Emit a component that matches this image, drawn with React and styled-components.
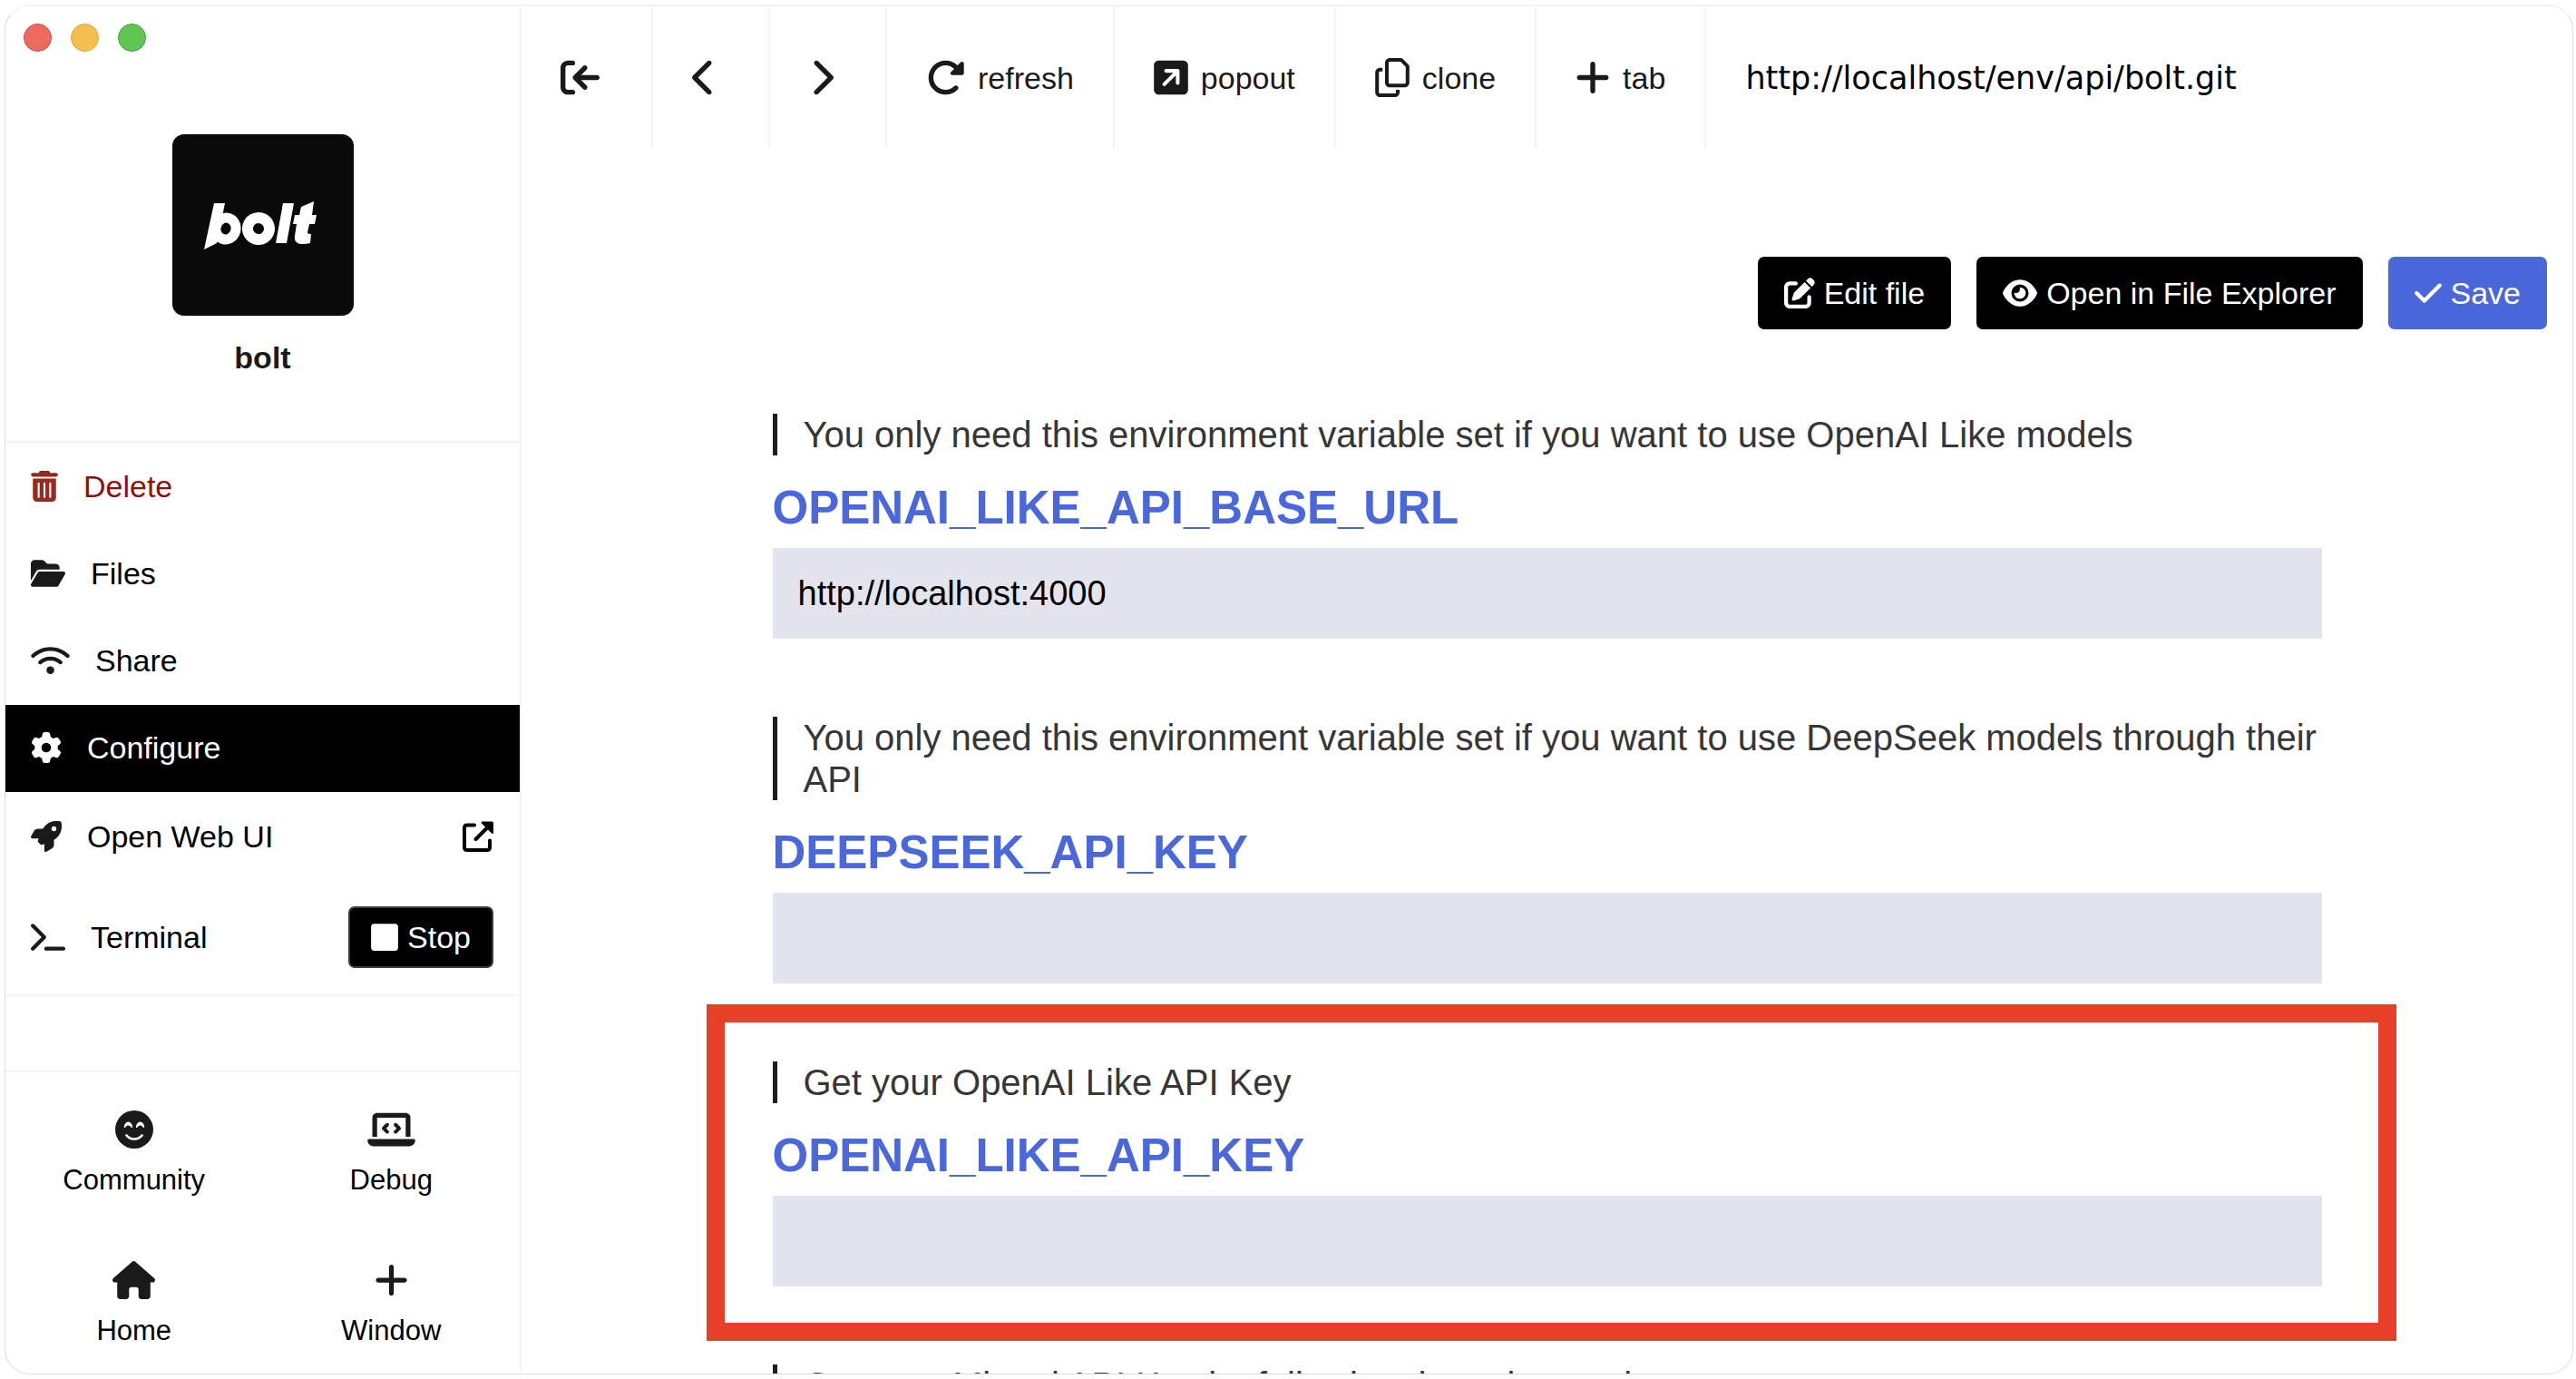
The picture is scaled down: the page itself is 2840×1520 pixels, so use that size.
import React from "react";
import styled, { createGlobalStyle, css } from "styled-components";
import {
  FaArrowRightToBracket,
  FaCheck,
  FaChevronLeft,
  FaChevronRight,
  FaEye,
  FaFaceSmileBeam,
  FaFolderOpen,
  FaGear,
  FaHouse,
  FaLaptopCode,
  FaPenToSquare,
  FaPlus,
  FaRegCopy,
  FaRocket,
  FaRotateRight,
  FaSquareArrowUpRight,
  FaTerminal,
  FaTrashCan,
  FaWifi,
} from "react-icons/fa6";
import { FaStop } from "react-icons/fa";

const sans = `"Liberation Sans", Arial, Helvetica, sans-serif`;
const line = "#f4f4f4";
const ink = "#1a1a1a";
const blue = "#4a68db";

const GlobalStyle = createGlobalStyle`
  *, *::before, *::after { box-sizing: border-box; }
  body { margin: 0; background: #fff; font-family: ${sans}; font-size: 34px; line-height: 38px; color: #000; }
  button, input { font: inherit; color: inherit; }
  h1, h2, p { margin: 0; }
  svg { display: block; flex: none; }
`;

const Page = styled.div`
  height: 100vh;
  padding: 5px 3px 5px 5px;
`;

const Window = styled.div`
  display: flex;
  height: 100%;
  overflow: hidden;
  border: 1px solid #dcdcdc;
  border-top: 2px solid #f4f4f4;
  border-radius: 28px;
  background: #fff;
`;

/* Font Awesome glyphs share a 512-unit height and vary in width. */
const Glyph = styled.span`
  flex: none;
  width: ${(p) => Math.round((p.$size * (p.$units || 512)) / 512)}px;
  height: ${(p) => p.$size}px;
  transform: ${(p) => (p.$mirror ? "scaleX(-1)" : "none")};

  svg {
    width: 100%;
    height: 100%;
  }
`;

const Sidebar = styled.aside`
  display: flex;
  flex-direction: column;
  flex: none;
  width: 569px;
  border-right: 2px solid ${line};
`;

const TrafficLights = styled.div`
  display: flex;
  gap: 21px;
  padding: 19px 20px 0;
`;

const Light = styled.button`
  width: 31px;
  height: 31px;
  padding: 0;
  border: 1px solid ${(p) => p.$edge};
  border-radius: 50%;
  background: ${(p) => p.$fill};
`;

const AppCard = styled.header`
  display: flex;
  flex-direction: column;
  align-items: center;
  gap: 27px;
  padding: 91px 0 73px;
  border-bottom: 3px solid ${line};
`;

const AppLogo = styled.svg`
  width: 200px;
  height: 200px;
  border-radius: 13px;
  background: #0a0a0a;
`;

const AppName = styled.h1`
  font-size: 34px;
  font-weight: 700;
  line-height: 38px;
  color: ${ink};
`;

const Menu = styled.nav`
  display: flex;
  flex-direction: column;
  border-bottom: 2px solid ${line};
`;

const MenuRow = styled.div`
  display: flex;
  align-items: center;
  justify-content: space-between;
  min-height: ${(p) => p.$height || 96}px;
  padding: 0 29px 2px 0;
  background: ${(p) => (p.$active ? "#000" : "transparent")};
`;

const MenuLink = styled.a`
  display: flex;
  flex: 1;
  align-items: center;
  align-self: stretch;
  gap: 28px;
  padding-left: 28px;
  color: ${(p) => p.$color || "#000"};
  text-decoration: none;

  ${Glyph} {
    color: ${(p) => p.$iconColor || ink};
  }
`;

const solidButton = css`
  display: flex;
  align-items: center;
  gap: 10px;
  color: #fff;
`;

const StopButton = styled.button`
  ${solidButton}
  height: 68px;
  padding: 0 23px;
  border: 2px solid #3c3c3c;
  border-radius: 7px;
  background: #000;
`;

const Spacer = styled.div`
  flex: 1;
  border-bottom: 2px solid ${line};
`;

const Shortcuts = styled.nav`
  display: grid;
  grid-template-columns: 1fr 1fr;
  row-gap: 71px;
  padding: 42px 0 29px;
`;

const Shortcut = styled.a`
  display: flex;
  flex-direction: column;
  align-items: center;
  gap: 17px;
  font-size: 31px;
  line-height: 36px;
  color: #000;
  text-decoration: none;

  ${Glyph} {
    color: ${ink};
  }
`;

const Main = styled.main`
  display: flex;
  flex: 1;
  flex-direction: column;
  min-width: 0;
`;

const Toolbar = styled.div`
  display: flex;
  flex: none;
  height: 157px;
`;

const ToolButton = styled.button`
  display: flex;
  align-items: center;
  gap: 14px;
  padding: 0 43px;
  border: 0;
  border-right: 2px solid ${line};
  background: transparent;
  color: ${ink};
`;

const Address = styled.input`
  flex: 1;
  min-width: 0;
  padding: 0 43px;
  border: 0;
  outline: 0;
  background: transparent;
  font-family: "DejaVu Sans", Verdana, sans-serif;
  font-size: 35px;
  color: #000;
`;

const Actions = styled.div`
  display: flex;
  flex: none;
  justify-content: flex-end;
  gap: 28px;
  padding: 119px 28px 93px;
`;

const ActionButton = styled.button`
  ${solidButton}
  height: 80px;
  padding: 0 29px;
  border: 0;
  border-radius: 7px;
  background: ${(p) => (p.$primary ? blue : "#000")};
`;

const Form = styled.form`
  display: flex;
  flex-direction: column;
  gap: 86px;
  width: 100%;
  max-width: 1708px;
  margin: 0 auto;
`;

const Field = styled.section`
  position: relative;
`;

const Hint = styled.p`
  padding-left: 29px;
  border-left: 5px solid #1f1f1f;
  font-size: 40px;
  line-height: 46px;
  color: #363636;
`;

const FieldName = styled.label`
  display: block;
  padding: 29px 0 15px;
  font-size: 51px;
  font-weight: 700;
  line-height: 58px;
  color: ${blue};
`;

const FieldInput = styled.input`
  display: block;
  width: 100%;
  height: 100px;
  padding: 0 28px;
  border: 0;
  border-radius: 0;
  outline: 0;
  background: #e4e4ee;
  font-size: 38px;
  color: #000;
`;

const Highlight = styled.div`
  position: absolute;
  inset: -63px -82px -60px -73px;
  border: 20px solid #e84027;
  pointer-events: none;
`;

const lights = [
  { name: "Close", fill: "#ec6a5e", edge: "#e0443a" },
  { name: "Minimize", fill: "#f4bf4f", edge: "#e2a526" },
  { name: "Zoom", fill: "#61c554", edge: "#35a82c" },
];

function OpenExternalIcon() {
  return (
    <svg viewBox="0 0 34 34" aria-hidden="true">
      <g fill="none" stroke="currentColor" strokeWidth="4" strokeLinecap="round">
        <path d="M13 4.5H5q-3 0-3 3V29q0 3 3 3h22q3 0 3-3v-7.500" />
        <path d="M14.500 20L28 6.500" />
      </g>
      <path
        d="M21.500 .5H32.500Q34 .5 34 2V13Q33.500 14.700 32 13.500L21 2.500Q20 1 21.500 .5z"
        fill="currentColor"
      />
    </svg>
  );
}

const menu = [
  { label: "Delete", icon: <FaTrashCan />, units: 448, color: "#910f0b", iconColor: "#952a23" },
  { label: "Files", icon: <FaFolderOpen />, units: 576 },
  { label: "Share", icon: <FaWifi />, units: 640 },
  { label: "Configure", icon: <FaGear />, color: "#fff", iconColor: "#fff", active: true },
  {
    label: "Open Web UI",
    icon: <FaRocket />,
    height: 99,
    trailing: (
      <Glyph $size={34}>
        <OpenExternalIcon />
      </Glyph>
    ),
  },
  {
    label: "Terminal",
    icon: <FaTerminal />,
    units: 576,
    height: 124,
    trailing: (
      <StopButton type="button">
        <Glyph $size={34} $units={448}>
          <FaStop />
        </Glyph>
        Stop
      </StopButton>
    ),
  },
];

const shortcuts = [
  { label: "Community", icon: <FaFaceSmileBeam /> },
  { label: "Debug", icon: <FaLaptopCode />, units: 640 },
  { label: "Home", icon: <FaHouse />, units: 576 },
  { label: "Window", icon: <FaPlus />, units: 448 },
];

const tools = [
  { name: "Collapse sidebar", icon: <FaArrowRightToBracket />, mirror: true },
  { name: "Back", icon: <FaChevronLeft />, units: 320 },
  { name: "Forward", icon: <FaChevronRight />, units: 320 },
  { name: "refresh", icon: <FaRotateRight />, text: true },
  { name: "popout", icon: <FaSquareArrowUpRight />, units: 448, text: true },
  { name: "clone", icon: <FaRegCopy />, units: 448, text: true },
  { name: "tab", icon: <FaPlus />, units: 448, text: true },
];

const fields = [
  {
    name: "OPENAI_LIKE_API_BASE_URL",
    hint: "You only need this environment variable set if you want to use OpenAI Like models",
    value: "http://localhost:4000",
  },
  {
    name: "DEEPSEEK_API_KEY",
    hint: "You only need this environment variable set if you want to use DeepSeek models through their API",
    value: "",
  },
  {
    name: "OPENAI_LIKE_API_KEY",
    hint: "Get your OpenAI Like API Key",
    value: "",
    highlighted: true,
  },
  {
    name: "",
    hint: "Get your Mistral API Key by following these instructions",
  },
];

function BoltLogo() {
  return (
    <AppLogo viewBox="0 0 200 200" role="img" aria-label="bolt logo">
      <g fill="none" stroke="#fff">
        <ellipse cx="59" cy="104" rx="11" ry="12" strokeWidth="11" transform="rotate(14 59 104)" />
        <ellipse cx="95" cy="104" rx="12" ry="12" strokeWidth="12" transform="rotate(14 95 104)" />
      </g>
      <g fill="#fff">
        <path d="M46 76h12l-9 44-14 7z" />
        <path d="M122 76h12l-8 44h-12z" />
        <path d="M142 80l14-6-2 15h5l-2 10h-6l-2 9q0 2 4 2l-1 10q-19 4-17-8l2-13h-4l2-10h5z" />
      </g>
    </AppLogo>
  );
}

export default function App() {
  return (
    <Page>
      <GlobalStyle />
      <Window>
        <Sidebar>
          <TrafficLights>
            {lights.map((l) => (
              <Light key={l.name} type="button" aria-label={l.name} $fill={l.fill} $edge={l.edge} />
            ))}
          </TrafficLights>
          <AppCard>
            <BoltLogo />
            <AppName>bolt</AppName>
          </AppCard>
          <Menu>
            {menu.map((m) => (
              <MenuRow key={m.label} $active={m.active} $height={m.height}>
                <MenuLink href="#" $color={m.color} $iconColor={m.iconColor}>
                  <Glyph $size={34} $units={m.units}>
                    {m.icon}
                  </Glyph>
                  {m.label}
                </MenuLink>
                {m.trailing}
              </MenuRow>
            ))}
          </Menu>
          <Spacer />
          <Shortcuts>
            {shortcuts.map((s) => (
              <Shortcut key={s.label} href="#">
                <Glyph $size={42} $units={s.units}>
                  {s.icon}
                </Glyph>
                {s.label}
              </Shortcut>
            ))}
          </Shortcuts>
        </Sidebar>
        <Main>
          <Toolbar>
            {tools.map((t) => (
              <ToolButton key={t.name} type="button" aria-label={t.name}>
                <Glyph $size={43} $units={t.units} $mirror={t.mirror}>
                  {t.icon}
                </Glyph>
                <span>{t.text ? t.name : ""}</span>
              </ToolButton>
            ))}
            <Address aria-label="Address" defaultValue="http://localhost/env/api/bolt.git" />
          </Toolbar>
          <Actions>
            <ActionButton type="button">
              <Glyph $size={34}>
                <FaPenToSquare />
              </Glyph>
              Edit file
            </ActionButton>
            <ActionButton type="button">
              <Glyph $size={34} $units={576}>
                <FaEye />
              </Glyph>
              Open in File Explorer
            </ActionButton>
            <ActionButton type="submit" form="env" $primary>
              <Glyph $size={34} $units={448}>
                <FaCheck />
              </Glyph>
              Save
            </ActionButton>
          </Actions>
          <Form id="env">
            {fields.map((f) => (
              <Field key={f.hint}>
                <Hint>{f.hint}</Hint>
                {f.name && (
                  <>
                    <FieldName htmlFor={f.name}>{f.name}</FieldName>
                    <FieldInput id={f.name} defaultValue={f.value} />
                  </>
                )}
                {f.highlighted && <Highlight />}
              </Field>
            ))}
          </Form>
        </Main>
      </Window>
    </Page>
  );
}
